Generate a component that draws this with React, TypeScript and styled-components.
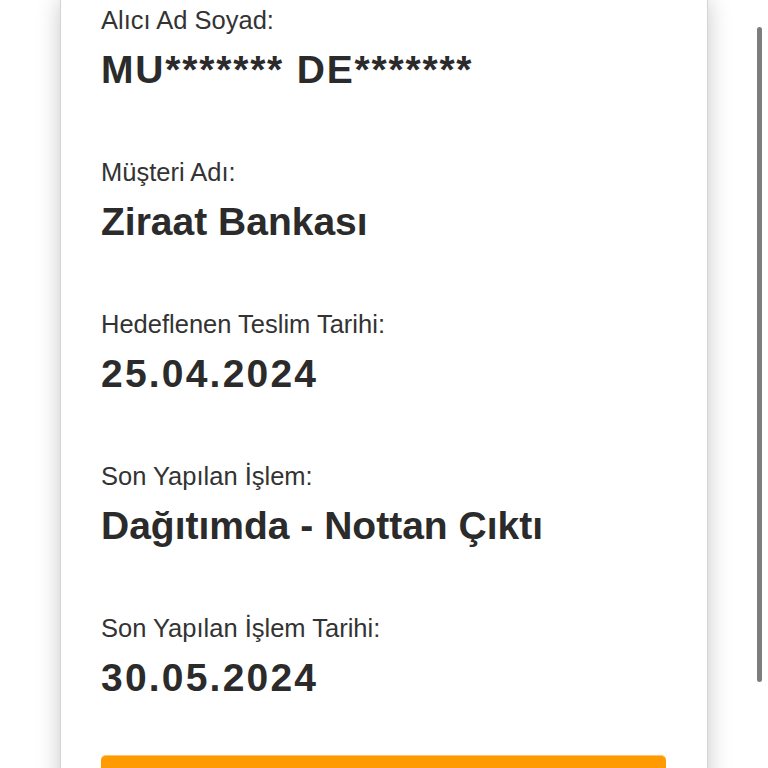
import styled, { createGlobalStyle } from 'styled-components';

const GlobalStyle = createGlobalStyle`
  html, body {
    margin: 0;
    padding: 0;
    background: #ffffff;
    overflow: hidden;
  }
  body {
    font-family: "Liberation Sans", Arial, sans-serif;
  }
`;

const Page = styled.div`
  position: relative;
  width: 768px;
  height: 768px;
  overflow: hidden;
  padding-left: 60px;
  box-sizing: border-box;
`;

const Card = styled.div`
  width: 648px;
  box-sizing: border-box;
  background: #ffffff;
  border-left: 1px solid #d4d4d4;
  border-right: 1px solid #d4d4d4;
  box-shadow: 0 0 22px rgba(0, 0, 0, 0.22);
  padding: 5px 41px 40px 40px;
`;

const Field = styled.div`
  display: flex;
  flex-direction: column;
  margin-bottom: 64px;

  &:last-of-type {
    margin-bottom: 54px;
  }
`;

const Label = styled.div`
  font-size: 25.5px;
  line-height: 30px;
  color: #333333;
  margin-bottom: 12px;
`;

const Value = styled.div<{ $tracking?: number }>`
  font-size: 39px;
  line-height: 46px;
  font-weight: 700;
  color: #2b2b2b;
  letter-spacing: ${(p) => p.$tracking ?? 0}px;
`;

const ActionButton = styled.button`
  display: block;
  width: 565px;
  height: 56px;
  border: none;
  border-top: 1px solid #ffc266;
  border-radius: 5px;
  background: #ff9a00;
  color: #ffffff;
  font-family: inherit;
  font-size: 24px;
  font-weight: 700;
`;

const ScrollThumb = styled.div`
  position: absolute;
  left: 757px;
  top: 27px;
  width: 5px;
  height: 655px;
  border-radius: 3px;
  background: #7d7d7d;
`;

const fields = [
  { label: 'Alıcı Ad Soyad:', value: 'MU******* DE*******', tracking: 1.8 },
  { label: 'Müşteri Adı:', value: 'Ziraat Bankası' },
  { label: 'Hedeflenen Teslim Tarihi:', value: '25.04.2024', tracking: 2.2 },
  { label: 'Son Yapılan İşlem:', value: 'Dağıtımda - Nottan Çıktı' },
  { label: 'Son Yapılan İşlem Tarihi:', value: '30.05.2024', tracking: 2.2 },
];

export default function App() {
  return (
    <>
      <GlobalStyle />
      <Page>
        <Card>
          {fields.map((f) => (
            <Field key={f.label}>
              <Label>{f.label}</Label>
              <Value $tracking={f.tracking}>{f.value}</Value>
            </Field>
          ))}
          <ActionButton />
        </Card>
        <ScrollThumb />
      </Page>
    </>
  );
}
